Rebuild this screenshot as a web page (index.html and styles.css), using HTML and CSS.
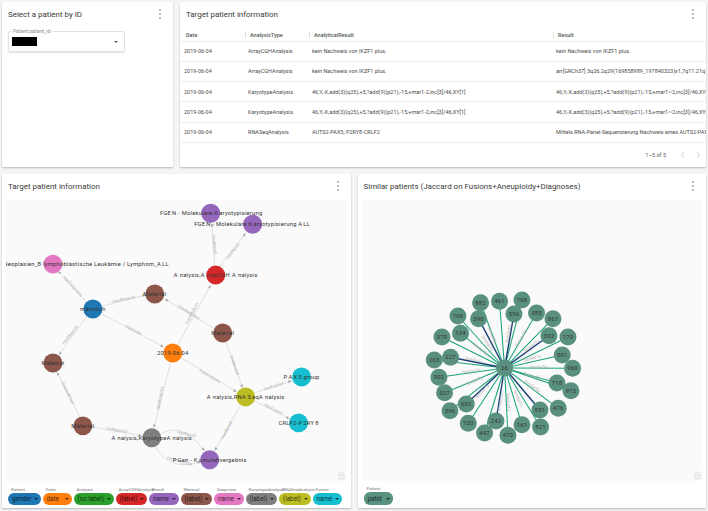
FILE: index.html
```html
<!DOCTYPE html>
<html lang="en">
<head>
<meta charset="utf-8">
<title>Patient dashboard</title>
<link rel="stylesheet" href="styles.css">
</head>
<body>
<main class="dash">
  <div class="row row-top">
    <section class="card card-select">
      <header class="card-head">
        <h2>Select a patient by ID</h2>
        <svg class="kebab" viewBox="0 0 4 12"><circle cx="2" cy="2" r="0.8"/><circle cx="2" cy="6" r="0.8"/><circle cx="2" cy="10" r="0.8"/></svg>
      </header>
      <div class="select">
        <span class="select-label">Patient patient_id</span>
        <span class="redacted"></span>
        <span class="caret"></span>
      </div>
    </section>
    <section class="card card-table">
      <header class="card-head">
        <h2>Target patient information</h2>
        <svg class="kebab" viewBox="0 0 4 12"><circle cx="2" cy="2" r="0.8"/><circle cx="2" cy="6" r="0.8"/><circle cx="2" cy="10" r="0.8"/></svg>
      </header>
      <div class="table-clip">
        <table class="grid">
          <thead>
            <tr><th class="c1">Date</th><th class="c2">AnalysisType</th><th class="c3">AnalyticalResult</th><th class="c4">Result</th></tr>
          </thead>
          <tbody>
            <tr><td>2019-06-04</td><td>ArrayCGHAnalysis</td><td>kein Nachweis von IKZF1 plus.</td><td>kein Nachweis von IKZF1 plus.</td></tr>
            <tr><td>2019-06-04</td><td>ArrayCGHAnalysis</td><td>kein Nachweis von IKZF1 plus.</td><td>arr[GRCh37] 3q26.2q29(169858989_197840323)x1,7q11.21q11.23(62</td></tr>
            <tr><td>2019-06-04</td><td>KaryotypeAnalysis</td><td>46,Y,-X,add(3)(q25),+5,?add(9)(p21),-15,+mar1-2,inc[3]/46,XY[1]</td><td>46,Y,-X,add(3)(q25),+5,?add(9)(p21),-15,+mar1~2,inc[3]/46,XY[1]</td></tr>
            <tr><td>2019-06-04</td><td>KaryotypeAnalysis</td><td>46,Y,-X,add(3)(q25),+5,?add(9)(p21),-15,+mar1-2,inc[3]/46,XY[1]</td><td>46,Y,-X,add(3)(q25),+5,?add(9)(p21),-15,+mar1~2,inc[3]/46,XY[1]</td></tr>
            <tr><td>2019-06-04</td><td>RNASeqAnalysis</td><td>AUTS2-PAX5; P2RY8-CRLF2</td><td>Mittels RNA-Panel-Sequenzierung Nachweis eines AUTS2-PAX5-Fusionstranskripts</td></tr>
          </tbody>
        </table>
      </div>
      <footer class="pager">
        <span>1–5 of 5</span>
        <svg class="chev" viewBox="0 0 6 8"><path d="M4 1 1.500 4 4 7"/></svg>
        <svg class="chev" viewBox="0 0 6 8"><path d="M2 1 4.500 4 2 7"/></svg>
      </footer>
    </section>
  </div>
  <div class="row row-bottom">
    <section class="card card-graph card-left">
      <header class="card-head">
        <h2>Target patient information</h2>
        <svg class="kebab" viewBox="0 0 4 12"><circle cx="2" cy="2" r="0.8"/><circle cx="2" cy="6" r="0.8"/><circle cx="2" cy="10" r="0.8"/></svg>
      </header>
      <div class="canvas">
        <svg class="graph" viewBox="6 200 341 281">
          <defs>
            <marker id="arrow" markerWidth="4" markerHeight="4" refX="3.500" refY="1.500" orient="auto" markerUnits="userSpaceOnUse"><path d="M0 0 3.500 1.500 0 3z" fill="#aaa"/></marker>
          </defs>
          <g class="edges">
            <path d="M93 309 58 271" marker-end="url(#arrow)"/>
            <path d="M102 306C120 302 132 298 146 295" marker-end="url(#arrow)"/>
            <path d="M102 314 164 347" marker-end="url(#arrow)"/>
            <path d="M87 316 59 355" marker-end="url(#arrow)"/>
            <path d="M178 345 211 285" marker-end="url(#arrow)"/>
            <path d="M214 328 165 299" marker-end="url(#arrow)"/>
            <path d="M215 266 212 223" marker-end="url(#arrow)"/>
            <path d="M220 266 246 233" marker-end="url(#arrow)"/>
            <path d="M226 342 243 388" marker-end="url(#arrow)"/>
            <path d="M182 358 237 392" marker-end="url(#arrow)"/>
            <path d="M171 362 154 428" marker-end="url(#arrow)"/>
            <path d="M255 393 292 381" marker-end="url(#arrow)"/>
            <path d="M255 401 290 419" marker-end="url(#arrow)"/>
            <path d="M241 405 215 451" marker-end="url(#arrow)"/>
            <path d="M92 427 142 436" marker-end="url(#arrow)"/>
            <path d="M80 417 57 372" marker-end="url(#arrow)"/>
            <path d="M161 434C180 424 192 436 205 451" marker-end="url(#arrow)"/>
            <path d="M156 447C166 465 182 468 201 462" marker-end="url(#arrow)"/>
          </g>
          <g class="edge-labels">
            <text transform="translate(73 286) rotate(47)">HasDiagnosis</text>
            <text transform="translate(124 299) rotate(-12)">HasMaterial</text>
            <text transform="translate(134 330) rotate(28)">HasOrder</text>
            <text transform="translate(70 335) rotate(-52)">HasMaterial</text>
            <text transform="translate(192 313) rotate(-62)">HasAnalysis</text>
            <text transform="translate(189 312) rotate(32)">CreatedFrom</text>
            <text transform="translate(215 245) rotate(85)">HasResult</text>
            <text transform="translate(233 251) rotate(-52)">HasResult</text>
            <text transform="translate(235 365) rotate(70)">OnMaterial</text>
            <text transform="translate(210 376) rotate(30)">HasAnalysis</text>
            <text transform="translate(160 398) rotate(-80)">HasAnalysis</text>
            <text transform="translate(274 386) rotate(-18)">HasFusion</text>
            <text transform="translate(274 409) rotate(26)">HasFusion</text>
            <text transform="translate(227 430) rotate(-62)">HasResult</text>
            <text transform="translate(117 430) rotate(9)">OnMaterial</text>
            <text transform="translate(68 393) rotate(64)">CreatedFrom</text>
            <text transform="translate(187 434) rotate(12)">HasResult</text>
            <text transform="translate(180 461) rotate(14)">HasKaryotype</text>
          </g>
          <g class="nodes">
            <circle class="n-purple" cx="211" cy="213" r="9.500"/>
            <circle class="n-purple" cx="253" cy="224" r="9.500"/>
            <circle class="n-pink" cx="53" cy="264" r="9.500"/>
            <circle class="n-red" cx="216" cy="275" r="9.500"/>
            <circle class="n-brown" cx="155" cy="294" r="9.500"/>
            <circle class="n-blue" cx="93" cy="309" r="9.500"/>
            <circle class="n-brown" cx="223" cy="333" r="9.500"/>
            <circle class="n-orange" cx="173" cy="353" r="9.500"/>
            <circle class="n-brown" cx="53" cy="363" r="9.500"/>
            <circle class="n-olive" cx="246" cy="397" r="9.500"/>
            <circle class="n-cyan" cx="302" cy="377" r="9.500"/>
            <circle class="n-cyan" cx="299" cy="423" r="9.500"/>
            <circle class="n-brown" cx="83" cy="426" r="9.500"/>
            <circle class="n-grey" cx="152" cy="438" r="9.500"/>
            <circle class="n-purple" cx="210" cy="460" r="9.500"/>
          </g>
          <g class="node-labels">
            <text x="211.500" y="213">FGE<tspan dx="1">N - Molekulare K</tspan><tspan dx="1">aryotypisierung</tspan></text>
            <text x="252.500" y="224">FGE<tspan dx="1">N - Molekulare K</tspan><tspan dx="1">aryotypisierung A</tspan><tspan dx="1">LL</tspan></text>
            <text class="end" x="169" y="264">Lymphatische Neoplasien_B lymphoblastische Leukämie / Lymphom_A<tspan dx="1">LL</tspan></text>
            <text x="216" y="275">A<tspan dx="2">nalysis,A</tspan><tspan dx="2">rrayCGH</tspan><tspan dx="2">A</tspan><tspan dx="2">nalysis</tspan></text>
            <text x="155" y="294">Material</text>
            <text x="93" y="309">männlich</text>
            <text x="223" y="333">Material</text>
            <text x="173" y="353">2019-06-04</text>
            <text x="53" y="363">Material</text>
            <text x="246" y="397">A<tspan dx="2">nalysis,RNA</tspan><tspan dx="1.500">S</tspan><tspan dx="1">eqA</tspan><tspan dx="2">nalysis</tspan></text>
            <text x="302" y="377">P<tspan dx="1">A</tspan><tspan dx="1">X</tspan><tspan dx="1">5 group</tspan></text>
            <text x="299" y="423">CRLF2-P<tspan dx="1">2RY</tspan><tspan dx="1">8</tspan></text>
            <text x="83" y="426">Material</text>
            <text x="152" y="438">A<tspan dx="2">nalysis,KaryotypeA</tspan><tspan dx="2">nalysis</tspan></text>
            <text x="210" y="460">P<tspan dx="1">Gen - K</tspan><tspan dx="1">umulativergebnis</tspan></text>
          </g>
        </svg>
        <svg class="lock" viewBox="0 0 8 10"><path d="M2 4.500V3a2 2 0 0 1 4 0v1.500"/><rect x="1" y="4.500" width="6" height="4.500"/><circle cx="4" cy="6.700" r="0.500"/></svg>
      </div>
      <div class="legend">
        <div class="chip"><span class="chip-label">Patient</span><span class="pill p-blue w-gender">gender<i></i></span></div>
        <div class="chip"><span class="chip-label">Order</span><span class="pill p-orange w-date">date<i></i></span></div>
        <div class="chip"><span class="chip-label">Analysis</span><span class="pill p-green w-nolabel">(no label)<i></i></span></div>
        <div class="chip"><span class="chip-label">ArrayCGHAnalysis</span><span class="pill p-red w-label">(label)<i></i></span></div>
        <div class="chip"><span class="chip-label">Result</span><span class="pill p-purple w-name">name<i></i></span></div>
        <div class="chip"><span class="chip-label">Material</span><span class="pill p-brown w-label">(label)<i></i></span></div>
        <div class="chip"><span class="chip-label">Diagnosis</span><span class="pill p-pink w-name">name<i></i></span></div>
        <div class="chip"><span class="chip-label">KaryotypeAnalysis</span><span class="pill p-grey w-label">(label)<i></i></span></div>
        <div class="chip"><span class="chip-label">RNASeqAnalysis</span><span class="pill p-olive w-label">(label)<i></i></span></div>
        <div class="chip"><span class="chip-label">Fusion</span><span class="pill p-cyan w-name">name<i></i></span></div>
      </div>
    </section>
    <section class="card card-graph card-right">
      <header class="card-head">
        <h2>Similar patients (Jaccard on Fusions+Aneuploidy+Diagnoses)</h2>
        <svg class="kebab" viewBox="0 0 4 12"><circle cx="2" cy="2" r="0.8"/><circle cx="2" cy="6" r="0.8"/><circle cx="2" cy="10" r="0.8"/></svg>
      </header>
      <div class="canvas">
        <svg class="graph" viewBox="361 200 341 281">
          <g class="sim">
            <path d="M503.300 368 479.300 302.700"/><path d="M503.300 368 498.300 301.300"/><path d="M503.300 368 520.700 300"/>
            <path d="M503.300 368 535.300 313"/><path d="M503.300 368 456.700 316"/><path d="M503.300 368 551.700 318.700"/>
            <path d="M503.300 368 459.300 333.300"/><path d="M503.300 368 566.700 337"/><path d="M503.300 368 440.700 337"/>
            <path d="M503.300 368 561 355"/><path d="M503.300 368 433 360"/><path d="M503.300 368 571.300 368.300"/>
            <path d="M503.300 368 437.700 377.300"/><path d="M503.300 368 555.700 383"/><path d="M503.300 368 569.700 390.700"/>
            <path d="M503.300 368 443.300 392.700"/><path d="M503.300 368 557 408.300"/><path d="M503.300 368 448.700 410.700"/>
            <path d="M503.300 368 467 423.300"/><path d="M503.300 368 520.700 424.700"/><path d="M503.300 368 539.300 427"/>
            <path d="M503.300 368 483.300 433"/><path d="M503.300 368 506.700 435.300"/>
          </g>
          <g class="sim sim-strong">
            <path d="M503.300 368 512.700 314"/><path d="M503.300 368 477.300 318.700"/><path d="M503.300 368 547.700 335.700"/>
            <path d="M503.300 368 449.300 357.300"/><path d="M503.300 368 465 404"/><path d="M503.300 368 538.700 410"/>
            <path d="M503.300 368 494.700 421"/>
          </g>
          <g class="edge-labels">
            <text transform="translate(491 335) rotate(68)">SimilarTo</text>
            <text transform="translate(486 343) rotate(58)">SimilarTo</text>
            <text transform="translate(479 349) rotate(40)">SimilarTo</text>
            <text transform="translate(473 360) rotate(12)">SimilarTo</text>
            <text transform="translate(470 371) rotate(-8)">SimilarTo</text>
            <text transform="translate(473 381) rotate(-22)">SimilarTo</text>
            <text transform="translate(481 391) rotate(-45)">SimilarTo</text>
            <text transform="translate(499 402) rotate(-80)">SimilarTo</text>
            <text transform="translate(507 334) rotate(-80)">SimilarTo</text>
            <text transform="translate(520 338) rotate(-60)">SimilarTo</text>
            <text transform="translate(530 346) rotate(-38)">SimilarTo</text>
            <text transform="translate(531 358) rotate(-15)">SimilarTo</text>
            <text transform="translate(537 366) rotate(0)">SimilarTo</text>
            <text transform="translate(531 376) rotate(15)">SimilarTo</text>
            <text transform="translate(531 386) rotate(35)">SimilarTo</text>
            <text transform="translate(517 398) rotate(68)">SimilarTo</text>
            <text transform="translate(507 402) rotate(85)">SimilarTo</text>
          </g>
          <g class="sim-nodes">
            <circle cx="503.300" cy="368" r="8.500"/><circle cx="479.300" cy="302.700" r="8.500"/><circle cx="498.300" cy="301.300" r="8.500"/>
            <circle cx="520.700" cy="300" r="8.500"/><circle cx="535.300" cy="313" r="8.500"/><circle cx="512.700" cy="314" r="8.500"/>
            <circle cx="477.300" cy="318.700" r="8.500"/><circle cx="456.700" cy="316" r="8.500"/><circle cx="551.700" cy="318.700" r="8.500"/>
            <circle cx="459.300" cy="333.300" r="8.500"/><circle cx="547.700" cy="335.700" r="8.500"/><circle cx="566.700" cy="337" r="8.500"/>
            <circle cx="440.700" cy="337" r="8.500"/><circle cx="561" cy="355" r="8.500"/><circle cx="449.300" cy="357.300" r="8.500"/>
            <circle cx="433" cy="360" r="8.500"/><circle cx="571.300" cy="368.300" r="8.500"/><circle cx="437.700" cy="377.300" r="8.500"/>
            <circle cx="555.700" cy="383" r="8.500"/><circle cx="569.700" cy="390.700" r="8.500"/><circle cx="443.300" cy="392.700" r="8.500"/>
            <circle cx="465" cy="404" r="8.500"/><circle cx="557" cy="408.300" r="8.500"/><circle cx="448.700" cy="410.700" r="8.500"/>
            <circle cx="538.700" cy="410" r="8.500"/><circle cx="467" cy="423.300" r="8.500"/><circle cx="494.700" cy="421" r="8.500"/>
            <circle cx="520.700" cy="424.700" r="8.500"/><circle cx="539.300" cy="427" r="8.500"/><circle cx="483.300" cy="433" r="8.500"/>
            <circle cx="506.700" cy="435.300" r="8.500"/>
          </g>
          <g class="node-labels">
            <text x="503.300" y="368">26</text><text x="479.300" y="302.700">882</text><text x="498.300" y="301.300">461</text>
            <text x="520.700" y="300">768</text><text x="535.300" y="313">385</text><text x="512.700" y="314">556</text>
            <text x="477.300" y="318.700">390</text><text x="456.700" y="316">706</text><text x="551.700" y="318.700">867</text>
            <text x="459.300" y="333.300">134</text><text x="547.700" y="335.700">302</text><text x="566.700" y="337">170</text>
            <text x="440.700" y="337">379</text><text x="561" y="355">591</text><text x="449.300" y="357.300">227</text>
            <text x="433" y="360">203</text><text x="571.300" y="368.300">960</text><text x="437.700" y="377.300">902</text>
            <text x="555.700" y="383">718</text><text x="569.700" y="390.700">915</text><text x="443.300" y="392.700">527</text>
            <text x="465" y="404">602</text><text x="557" y="408.300">476</text><text x="448.700" y="410.700">396</text>
            <text x="538.700" y="410">951</text><text x="467" y="423.300">730</text><text x="494.700" y="421">242</text>
            <text x="520.700" y="424.700">161</text><text x="539.300" y="427">821</text><text x="483.300" y="433">447</text>
            <text x="506.700" y="435.300">470</text>
          </g>
        </svg>
        <svg class="lock" viewBox="0 0 8 10"><path d="M2 4.500V3a2 2 0 0 1 4 0v1.500"/><rect x="1" y="4.500" width="6" height="4.500"/><circle cx="4" cy="6.700" r="0.500"/></svg>
      </div>
      <div class="legend">
        <div class="chip"><span class="chip-label">Patient</span><span class="pill p-sim w-name">patid<i></i></span></div>
      </div>
    </section>
  </div>
</main>
</body>
</html>
```
FILE: styles.css
```css
* { box-sizing: border-box; }
html, body { margin: 0; height: 100%; }
body {
  width: 708px;
  height: 511px;
  overflow: hidden;
  background: #f5f5f5;
  font-family: Roboto, "Liberation Sans", sans-serif;
  color: #333;
}
.dash {
  display: flex;
  flex-direction: column;
  gap: 7px;
  padding: 2px 2px 3px 2px;
  height: 100%;
}
.row { display: flex; gap: 7px; }
.row-top { height: 165px; }
.row-bottom { flex: 1; min-height: 0; }
.card {
  background: #fff;
  border-radius: 1px;
  box-shadow: 0 1px 2px rgba(0, 0, 0, .25);
  display: flex;
  flex-direction: column;
  min-width: 0;
  overflow: hidden;
}
.card-select { width: 171px; padding: 0 6px; }
.card-table { width: 526px; }
.card-left { width: 349px; }
.card-right { width: 349px; }
.card-head {
  height: 24px;
  flex: none;
  display: flex;
  align-items: center;
  justify-content: space-between;
}
.card-head h2 {
  margin: 0;
  font-size: 7.950px;
  font-weight: 400;
  color: #3a3a3a;
  white-space: nowrap;
}
.kebab { width: 4px; height: 12px; fill: #666; flex: none; }
.card-select .card-head { padding-right: 5px; }
.card-table .card-head { padding: 0 11px 0 6px; }
.card-graph .card-head { padding: 0 11px 0 6px; }
.select {
  height: 21px;
  margin-top: 5px;
  width: 117px;
  border: 1px solid #e2e2e2;
  border-radius: 2px;
  box-shadow: 0 1px 1px rgba(0, 0, 0, .12);
  display: flex;
  align-items: center;
  justify-content: space-between;
  padding: 0 6px 0 3px;
  position: relative;
}
.select-label {
  position: absolute;
  left: 3px;
  top: -3px;
  padding: 0 1px;
  background: #fff;
  font-size: 4.800px;
  line-height: 5px;
  color: #888;
}
.redacted { width: 25px; height: 9px; background: #000; }
.caret, .pill i {
  width: 0;
  height: 0;
  border-left: 2px solid transparent;
  border-right: 2px solid transparent;
  border-top: 2px solid #555;
}
.pill i { border-top-color: rgba(0, 0, 0, .65); flex: none; }
.table-clip { flex: 1; overflow: hidden; }
.grid {
  border-collapse: collapse;
  table-layout: fixed;
  width: 640px;
  font-size: 5.500px;
  color: #4c4c4c;
}
.c1, .c2 { width: 64px; }
.c3 { width: 244px; }
.c4 { width: 268px; }
.grid th {
  height: 15px;
  padding: 3px 0 0 6px;
  font-weight: 500;
  text-align: left;
  border-bottom: 1px solid #eee;
  color: #555;
}
.grid th + th { background: linear-gradient(#ddd, #ddd) 1px 6px / 1px 6px no-repeat; }
.grid td {
  height: 20.300px;
  padding: 0 0 0 4px;
  border-bottom: 1px solid #eee;
  white-space: nowrap;
  overflow: hidden;
}
.pager {
  flex: none;
  height: 24px;
  display: flex;
  align-items: center;
  justify-content: flex-end;
  gap: 9px;
  padding-right: 5px;
  font-size: 5.500px;
  color: #555;
}
.pager span { margin-right: 5px; }
.chev { width: 6px; height: 8px; fill: none; stroke: #c4c4c4; stroke-width: .8; }
.canvas {
  flex: none;
  height: 281px;
  margin: 2px 4px 0;
  background: #fafafa;
  position: relative;
  overflow: hidden;
}
.card-right .canvas { margin: 2px 3px 0 4px; }
.graph { display: block; width: 100%; height: 100%; }
.edges path { fill: none; stroke: #c2c2c2; stroke-width: .5; }
.sim path { fill: none; stroke: #1ba37a; stroke-width: 1.050; }
.sim-strong path { stroke: #1d3f78; stroke-width: 1.400; }
.edge-labels text {
  font-size: 4.300px;
  fill: #b0b0b0;
  text-anchor: middle;
  dominant-baseline: central;
}
.n-purple { fill: #9467bd; }
.n-pink { fill: #e377c2; }
.n-red { fill: #d62728; }
.n-brown { fill: #8c564b; }
.n-blue { fill: #1f77b4; }
.n-orange { fill: #ff7f0e; }
.n-olive { fill: #bcbd22; }
.n-cyan { fill: #17becf; }
.n-grey { fill: #7f7f7f; }
.sim-nodes circle { fill: #5a907f; }
.node-labels text {
  font-size: 5.800px;
  fill: #333;
  text-anchor: middle;
  dominant-baseline: central;
  letter-spacing: .25px;
}
.node-labels text.end { text-anchor: end; }
.lock {
  position: absolute;
  right: 2px;
  bottom: 1px;
  width: 7px;
  height: 9px;
  fill: none;
  stroke: #d0d0d0;
  stroke-width: .7;
}
.legend {
  flex: none;
  display: flex;
  gap: 2px;
  padding: 6px 0 0 6px;
}
.card-right .legend { padding-top: 5px; }
.card-right .pill { height: 13px; }
.chip { display: flex; flex-direction: column; }
.chip-label {
  width: 0;
  margin-left: 3px;
  font-size: 4.400px;
  line-height: 6px;
  color: #777;
  white-space: nowrap;
}
.pill {
  height: 12px;
  border-radius: 6px;
  display: flex;
  align-items: center;
  justify-content: space-between;
  padding: 0 3px 0 4px;
  font-size: 6.300px;
  white-space: nowrap;
  color: rgba(0, 0, 0, .75);
}
.w-gender { width: 32.500px; }
.w-date { width: 29px; }
.w-nolabel { width: 40px; }
.w-label { width: 31.500px; }
.w-name { width: 29.500px; }
.p-blue { background: #1f77b4; }
.p-orange { background: #ff7f0e; }
.p-green { background: #2ca02c; }
.p-red { background: #d62728; }
.p-purple { background: #9467bd; }
.p-brown { background: #8c564b; }
.p-pink { background: #e377c2; }
.p-grey { background: #7f7f7f; }
.p-olive { background: #bcbd22; }
.p-cyan { background: #17becf; }
.p-sim { background: #5a907f; }
```
